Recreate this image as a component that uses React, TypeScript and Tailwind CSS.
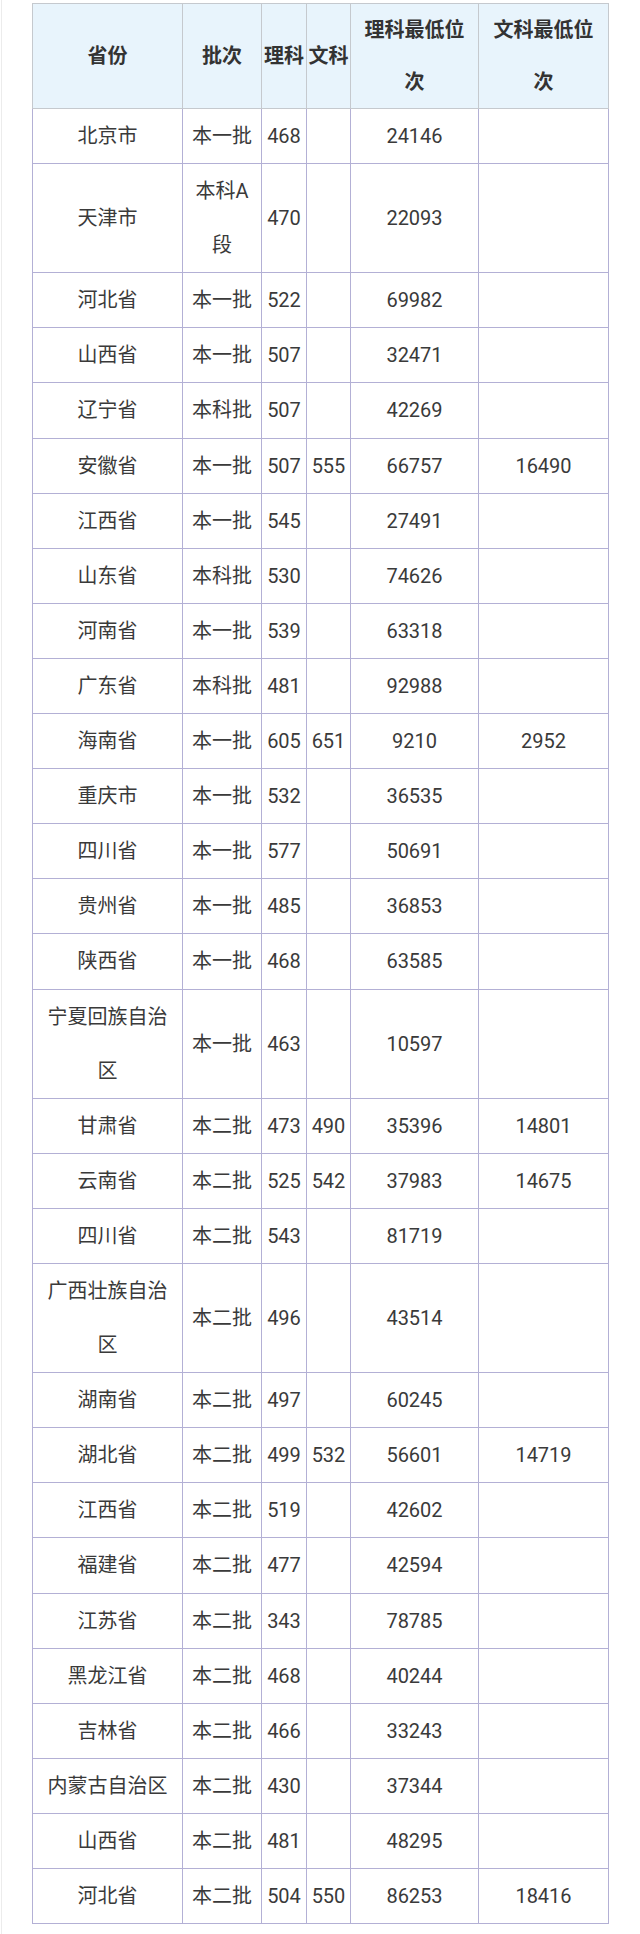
type Row = {
  province: string[];
  batch: string[];
  sci: string;
  arts: string;
  sciRank: string;
  artsRank: string;
};

const r = (
  province: string | string[],
  batch: string | string[],
  sci: string,
  arts: string,
  sciRank: string,
  artsRank: string
): Row => ({
  province: Array.isArray(province) ? province : [province],
  batch: Array.isArray(batch) ? batch : [batch],
  sci,
  arts,
  sciRank,
  artsRank,
});

const rows: Row[] = [
  r("北京市", "本一批", "468", "", "24146", ""),
  r("天津市", ["本科A", "段"], "470", "", "22093", ""),
  r("河北省", "本一批", "522", "", "69982", ""),
  r("山西省", "本一批", "507", "", "32471", ""),
  r("辽宁省", "本科批", "507", "", "42269", ""),
  r("安徽省", "本一批", "507", "555", "66757", "16490"),
  r("江西省", "本一批", "545", "", "27491", ""),
  r("山东省", "本科批", "530", "", "74626", ""),
  r("河南省", "本一批", "539", "", "63318", ""),
  r("广东省", "本科批", "481", "", "92988", ""),
  r("海南省", "本一批", "605", "651", "9210", "2952"),
  r("重庆市", "本一批", "532", "", "36535", ""),
  r("四川省", "本一批", "577", "", "50691", ""),
  r("贵州省", "本一批", "485", "", "36853", ""),
  r("陕西省", "本一批", "468", "", "63585", ""),
  r(["宁夏回族自治", "区"], "本一批", "463", "", "10597", ""),
  r("甘肃省", "本二批", "473", "490", "35396", "14801"),
  r("云南省", "本二批", "525", "542", "37983", "14675"),
  r("四川省", "本二批", "543", "", "81719", ""),
  r(["广西壮族自治", "区"], "本二批", "496", "", "43514", ""),
  r("湖南省", "本二批", "497", "", "60245", ""),
  r("湖北省", "本二批", "499", "532", "56601", "14719"),
  r("江西省", "本二批", "519", "", "42602", ""),
  r("福建省", "本二批", "477", "", "42594", ""),
  r("江苏省", "本二批", "343", "", "78785", ""),
  r("黑龙江省", "本二批", "468", "", "40244", ""),
  r("吉林省", "本二批", "466", "", "33243", ""),
  r("内蒙古自治区", "本二批", "430", "", "37344", ""),
  r("山西省", "本二批", "481", "", "48295", ""),
  r("河北省", "本二批", "504", "550", "86253", "18416"),
];

// multi-line cell text, broken where the original wraps
function Lines({ parts }: { parts: string[] }) {
  return (
    <>
      {parts.map((p, i) => (
        <span key={i}>
          {i > 0 && <br />}
          {p}
        </span>
      ))}
    </>
  );
}

const th =
  "border border-[#c5c9ce] p-0 text-center align-middle font-bold leading-[52px] text-[#333]";
const td =
  "border border-[#b3b0d5] p-0 text-center align-middle leading-[54.1px] whitespace-nowrap";

export default function App() {
  return (
    <div
      className="min-h-[1934px] bg-white"
      style={{ fontFamily: "Roboto, 'Noto Sans CJK SC', sans-serif" }}
    >
      <div className="ml-[1px] min-h-[1934px] border-l border-[#ececec] pt-[3px] pl-[30px]">
        <table className="w-[576px] table-fixed border-collapse text-[20px] text-[#3a3a3a]">
          <colgroup>
            <col className="w-[150px]" />
            <col className="w-[79px]" />
            <col className="w-[45px]" />
            <col className="w-[44px]" />
            <col className="w-[128px]" />
            <col className="w-[130px]" />
          </colgroup>
          <thead>
            <tr className="bg-[#e8f4fc]">
              <th className={th}>省份</th>
              <th className={th}>批次</th>
              <th className={th}>理科</th>
              <th className={th}>文科</th>
              <th className={th}>
                理科最低位
                <br />次
              </th>
              <th className={th}>
                文科最低位
                <br />次
              </th>
            </tr>
          </thead>
          <tbody>
            {rows.map((row, i) => (
              <tr key={i}>
                <td className={td}>
                  <Lines parts={row.province} />
                </td>
                <td className={td}>
                  <Lines parts={row.batch} />
                </td>
                <td className={td}>{row.sci}</td>
                <td className={td}>{row.arts}</td>
                <td className={td}>{row.sciRank}</td>
                <td className={td}>{row.artsRank}</td>
              </tr>
            ))}
          </tbody>
        </table>
      </div>
    </div>
  );
}
